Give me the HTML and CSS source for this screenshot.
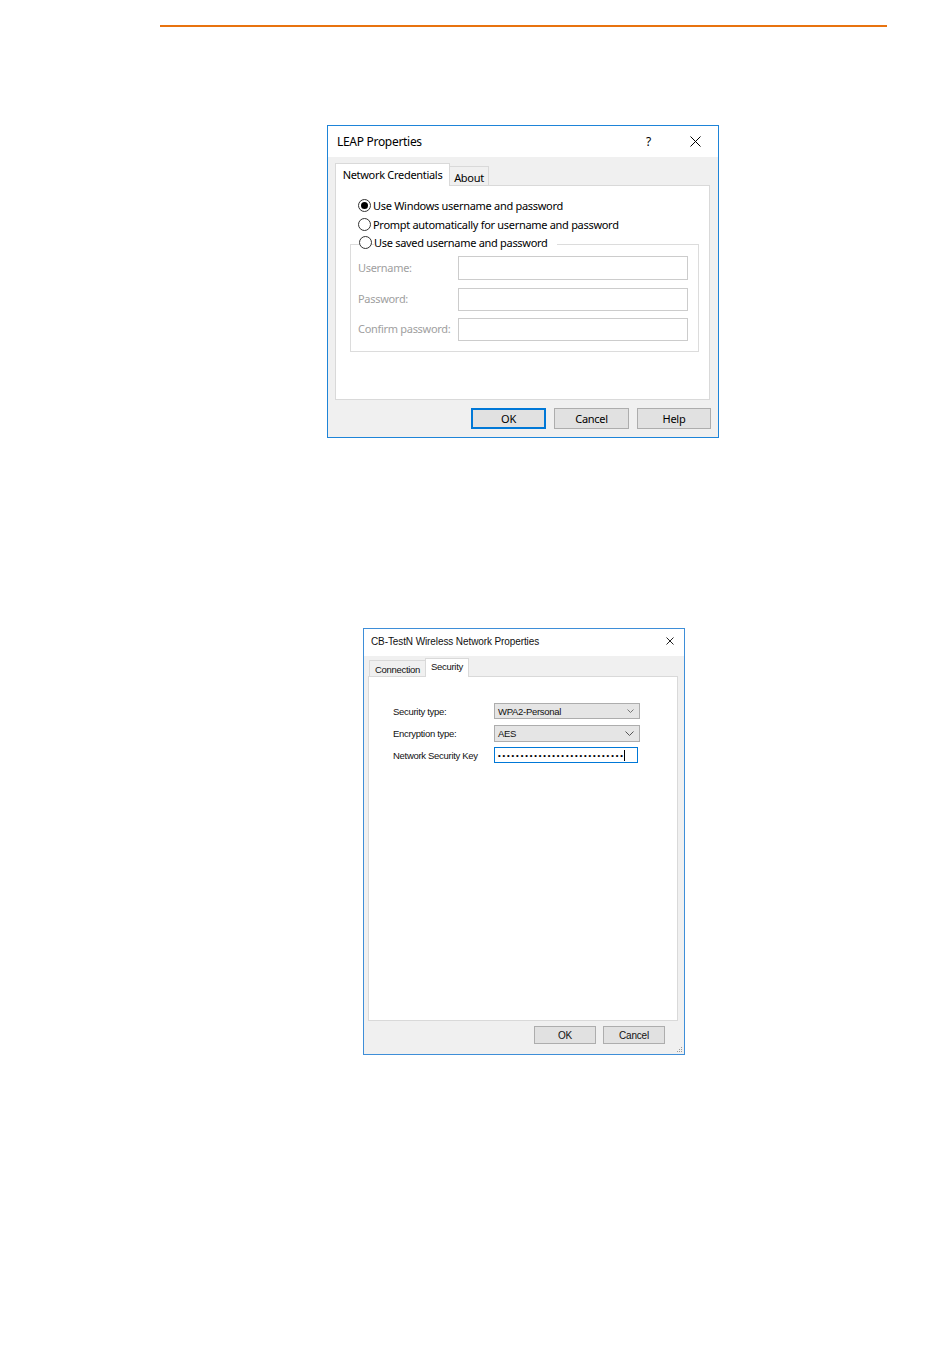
FILE: index.html
```html
<!DOCTYPE html>
<html>
<head>
<meta charset="utf-8">
<link rel="stylesheet" href="styles.css">
</head>
<body>
<div class="page">
  <div class="rule"></div>

  <div class="dlg1">
    <div class="d1-title">
      <span class="d1-title-text">LEAP Properties</span>
      <span class="d1-help">?</span>
      <svg class="d1-close" width="11" height="11" viewBox="0 0 11 11"><path d="M0.5 0.5 L10.5 10.5 M10.5 0.5 L0.5 10.5" stroke="#000" stroke-width="1"/></svg>
    </div>
    <div class="d1-body">
      <div class="d1-tabs">
        <div class="d1-tab d1-tab-active">Network Credentials</div>
        <div class="d1-tab d1-tab-idle">About</div>
      </div>
      <div class="d1-panel">
        <div class="radio-row"><span class="radio radio-on"></span><span>Use Windows username and password</span></div>
        <div class="radio-row"><span class="radio"></span><span>Prompt automatically for username and password</span></div>
        <div class="group">
          <div class="radio-row group-legend"><span class="radio"></span><span class="legend-text">Use saved username and password</span></div>
          <div class="field-row f1"><span class="field-label">Username:</span><span class="field-box"></span></div>
          <div class="field-row f2"><span class="field-label">Password:</span><span class="field-box"></span></div>
          <div class="field-row f3"><span class="field-label">Confirm password:</span><span class="field-box"></span></div>
        </div>
      </div>
      <div class="d1-buttons">
        <div class="btn1 btn1-default">OK</div>
        <div class="btn1">Cancel</div>
        <div class="btn1 btn1-help">Help</div>
      </div>
    </div>
  </div>

  <div class="dlg2">
    <div class="d2-title">
      <span class="d2-title-text">CB-TestN Wireless Network Properties</span>
      <svg class="d2-close" width="8" height="8" viewBox="0 0 8 8"><path d="M0.5 0.5 L7.5 7.5 M7.5 0.5 L0.5 7.5" stroke="#222" stroke-width="1"/></svg>
    </div>
    <div class="d2-body">
      <div class="d2-tabs">
        <div class="d2-tab d2-tab-idle">Connection</div>
        <div class="d2-tab d2-tab-active">Security</div>
      </div>
      <div class="d2-panel">
        <div class="d2-row r1"><span class="d2-label">Security type:</span><span class="d2-select">WPA2-Personal<svg class="chev" width="7" height="4" viewBox="0 0 7 4"><path d="M0.5 0.5 L3.5 3.5 L6.5 0.5" fill="none" stroke="#777" stroke-width="1"/></svg></span></div>
        <div class="d2-row r2"><span class="d2-label">Encryption type:</span><span class="d2-select">AES<svg class="chev" width="9" height="5" viewBox="0 0 9 5"><path d="M0.5 0.5 L4.5 4.5 L8.5 0.5" fill="none" stroke="#555" stroke-width="1"/></svg></span></div>
        <div class="d2-row r3"><span class="d2-label">Network Security Key</span><span class="d2-key"><span class="dots">••••••••••••••••••••••••••••</span><span class="caret"></span></span></div>
      </div>
      <div class="d2-buttons">
        <div class="btn2">OK</div>
        <div class="btn2">Cancel</div>
      </div>
      <svg class="grip" width="6" height="6" viewBox="0 0 6 6"><rect x="4" y="0" width="1" height="1" fill="#999"/><rect x="2" y="2" width="1" height="1" fill="#999"/><rect x="4" y="2" width="1" height="1" fill="#999"/><rect x="0" y="4" width="1" height="1" fill="#999"/><rect x="2" y="4" width="1" height="1" fill="#999"/><rect x="4" y="4" width="1" height="1" fill="#999"/></svg>
    </div>
  </div>
</div>
</body>
</html>
```

FILE: styles.css
```css
* { box-sizing: border-box; }
html, body { margin: 0; padding: 0; background: #fff; }
body { width: 950px; height: 1369px; font-family: "Noto Sans", "Open Sans", sans-serif; }
.page { padding-top: 25px; }
.rule { margin-left: 160px; width: 727px; height: 2px; background: #e8730f; }

/* ---------- Dialog 1 ---------- */
.dlg1 {
  margin-left: 327px; margin-top: 98px;
  width: 392px; height: 313px;
  border: 1px solid #1e84d8;
  display: flex; flex-direction: column;
  font-size: 11px; letter-spacing: -0.3px; color: #000;
}
.d1-title {
  height: 31px; background: #fff;
  display: flex; align-items: center;
  padding-left: 9px;
}
.d1-title-text { flex: 1; font-size: 12px; }
.d1-help { font-size: 12px; margin-right: 39px; }
.d1-close { margin-right: 17px; }
.d1-body { flex: 1; background: #f0f0f0; padding: 7px 7px 0 7px; }
.d1-tabs { display: flex; align-items: flex-end; height: 22px; position: relative; z-index: 1; }
.d1-tab { border: 1px solid #d9d9d9; border-bottom: none; display: flex; align-items: center; justify-content: center; white-space: nowrap; }
.d1-tab-active { width: 115px; height: 23px; background: #fff; padding-bottom: 2px; }
.d1-tab-idle { width: 40px; height: 20px; background: #f0f0f0; margin-left: -1px; padding-top: 2px; border-bottom: 1px solid #d9d9d9; }
.d1-panel {
  width: 375px; height: 215px; margin-top: -1px;
  border: 1px solid #d9d9d9; background: #fff;
  padding: 13px 0 0 22px;
}
.radio-row { display: flex; align-items: center; height: 12px; margin-bottom: 7px; white-space: nowrap; }
.radio {
  width: 13px; height: 13px; border-radius: 50%;
  border: 1px solid #333; background: #fff;
  margin-right: 2px; flex: none; position: relative;
}
.radio-on::after {
  content: ""; position: absolute; left: 2px; top: 2px;
  width: 7px; height: 7px; border-radius: 50%; background: #000;
}
.group {
  margin-left: -8px; margin-top: 14px;
  width: 349px; height: 108px;
  border: 1px solid #dcdcdc;
  padding: 0 10px 0 7px;
}
.group-legend { margin-top: -9px; margin-left: 1px; margin-bottom: 0; }
.legend-text { background: #fff; padding-right: 9px; }
.field-row { display: flex; align-items: center; justify-content: space-between; white-space: nowrap; }
.field-label { color: #a0a0a0; margin-top: -2px; }
.field-box { width: 230px; border: 1px solid #cccccc; background: #fff; flex: none; }
.f1 { margin-top: 8px; }
.f1 .field-box { height: 24px; }
.f2 { margin-top: 8px; }
.f2 .field-box { height: 23px; }
.f3 { margin-top: 7px; }
.f3 .field-box { height: 23px; }
.d1-buttons { display: flex; justify-content: flex-end; gap: 8px; margin-top: 8px; }
.btn1 {
  width: 75px; height: 21px;
  background: #e1e1e1; border: 1px solid #adadad;
  display: flex; align-items: center; justify-content: center;
}
.btn1-default { border: 2px solid #0078d7; }
.btn1-help { width: 74px; }

/* ---------- Dialog 2 ---------- */
.dlg2 {
  margin-left: 363px; margin-top: 190px;
  width: 322px; height: 427px;
  border: 1px solid #3e8ed8;
  display: flex; flex-direction: column;
  font-family: "Liberation Sans", Arial, sans-serif;
  font-size: 9.5px; color: #111; letter-spacing: -0.3px;
}
.d2-title { height: 27px; background: #fff; display: flex; align-items: center; padding-left: 7px; padding-bottom: 3px; }
.d2-title-text { flex: 1; font-size: 10px; letter-spacing: -0.1px; }
.d2-close { margin-right: 10px; }
.d2-body { flex: 1; background: #f0f0f0; padding: 2px 6px 0 4px; position: relative; }
.d2-tabs { display: flex; align-items: flex-end; height: 19px; padding-left: 1px; position: relative; z-index: 1; }
.d2-tab { border: 1px solid #d9d9d9; border-bottom: none; display: flex; align-items: center; justify-content: center; }
.d2-tab-idle { width: 57px; height: 17px; background: #f0f0f0; border-bottom: 1px solid #d9d9d9; padding-top: 1px; }
.d2-tab-active { width: 44px; height: 19px; background: #fff; margin-left: -1px; padding-bottom: 4px; }
.d2-panel {
  width: 310px; height: 345px; margin-top: -1px;
  background: #fff; border: 1px solid #d9d9d9;
  padding: 26px 0 0 24px;
}
.d2-row { display: flex; align-items: center; }
.d2-label { width: 101px; }
.d2-select {
  width: 146px; height: 16px;
  background: #e5e5e5; border: 1px solid #adadad;
  display: flex; align-items: center; justify-content: space-between;
  padding: 0 5px 0 3px;
}
.r2 { margin-top: 6px; }
.r2 .d2-select { height: 17px; }
.r3 { margin-top: 5px; }
.d2-key {
  width: 144px; height: 16px;
  border: 1px solid #0078d7; background: #fff;
  display: flex; align-items: center; padding-left: 3px;
}
.dots { font-size: 7.5px; font-weight: bold; letter-spacing: 1.9px; color: #000; }
.caret { width: 1px; height: 11px; background: #000; margin-left: -1px; }
.d2-buttons { display: flex; justify-content: flex-end; gap: 7px; margin-top: 5px; padding-right: 13px; }
.btn2 {
  width: 62px; height: 18px;
  background: #e1e1e1; border: 1px solid #adadad;
  display: flex; align-items: center; justify-content: center;
  font-size: 10px; letter-spacing: -0.2px;
}
.grip { position: absolute; right: 1px; bottom: 1px; }
```
